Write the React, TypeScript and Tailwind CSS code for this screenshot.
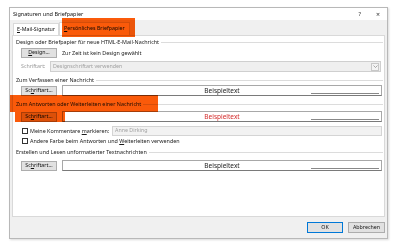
import React from "react";

const font = "font-['Segoe_UI','Noto_Sans',sans-serif]";

function Btn({ children }: { children: React.ReactNode }) {
  return (
    <div className="flex h-[10px] w-[36px] shrink-0 items-center justify-center border border-[#adadad] bg-[#e1e1e1] text-[5.3px] text-[#111]">
      {children}
    </div>
  );
}

function GroupLabel({ children }: { children: React.ReactNode }) {
  return (
    <div className="flex h-[10px] items-center gap-[2px] pl-[3px] pr-[1px]">
      <span className="whitespace-nowrap text-[5.4px] text-[#1a1a1a]">{children}</span>
      <div className="h-px flex-1 bg-[#dcdcdc]" />
    </div>
  );
}

function Preview({ red }: { red?: boolean }) {
  return (
    <div className="relative flex h-[11px] flex-1 items-center justify-center border border-[#a8a8a8] border-b-[#7a7a7a] bg-white">
      <span className={`text-[6.5px] ${red ? "text-[#d42a2a]" : "text-[#222]"}`}>Beispieltext</span>
      <div className="absolute bottom-[1px] right-[2px] h-px w-[68px] bg-[#888]" />
    </div>
  );
}

function FontRow({ red }: { red?: boolean }) {
  return (
    <div className="flex items-center gap-[5px] pl-[8px] pr-[2px]">
      <Btn>
        <span>
          Sc<span className="underline">h</span>riftart...
        </span>
      </Btn>
      <Preview red={red} />
    </div>
  );
}

function Check({ children }: { children: React.ReactNode }) {
  return (
    <div className="flex h-[10px] items-center gap-[2px]">
      <div className="h-[6px] w-[6px] border border-[#333] bg-white" />
      <span className="whitespace-nowrap text-[5.4px] text-[#1a1a1a]">{children}</span>
    </div>
  );
}

export default function App() {
  return (
    <div className={`relative h-[246px] w-[400px] bg-white pl-[9px] pt-[7px] ${font}`}>
      <div className="flex h-[232px] w-[379px] flex-col border border-[#b8b8b8] bg-[#f0f0f0] shadow-[1px_1px_2px_rgba(0,0,0,0.15)]">
        {/* title bar */}
        <div className="flex h-[12px] items-center bg-white pl-[3px] pr-[7px]">
          <span className="text-[5.5px] text-[#111]">Signaturen und Briefpapier</span>
          <span className="ml-auto text-[6px] text-[#333]">?</span>
          <span className="ml-[15px] text-[7px] leading-none text-[#333]">×</span>
        </div>

        {/* tabs */}
        <div className="flex h-[15px] items-end pl-[3px]">
          <div className="flex h-[12px] items-center border border-b-0 border-[#d9d9d9] bg-white px-[3px] text-[5.3px] text-[#111]">
            <span>
              <span className="underline">E</span>-Mail-Signatur
            </span>
          </div>
          <div className="flex h-[13px] items-center border border-b-0 border-[#d9d9d9] bg-white px-[4px] text-[5.3px] text-[#111]">
            <span>
              <span className="underline">P</span>ersönliches Briefpapier
            </span>
          </div>
        </div>

        {/* panel */}
        <div className="mx-[2px] flex h-[182px] flex-col border border-[#d9d9d9] bg-white pt-[1px]">
          <GroupLabel>Design oder Briefpapier für neue HTML-E-Mail-Nachricht</GroupLabel>
          <div className="mt-[1px] flex items-center gap-[5px] pl-[8px]">
            <Btn>
              <span>
                <span className="underline">D</span>esign...
              </span>
            </Btn>
            <span className="text-[5.4px] text-[#1a1a1a]">Zur Zeit ist kein Design gewählt</span>
          </div>
          <div className="mt-[3px] flex items-center gap-[2px] pl-[8px] pr-[3px]">
            <span className="w-[27px] text-[5.3px] text-[#9a9a9a]">Schriftart:</span>
            <div className="flex h-[11px] flex-1 items-center border border-[#cfcfcf] bg-[#efefef] pl-[2px]">
              <span className="text-[5.3px] text-[#a0a0a0]">Designschriftart verwenden</span>
              <div className="ml-auto mr-[1px] flex h-[8px] w-[8px] items-center justify-center border border-[#c8c8c8] bg-[#f4f4f4]">
                <svg width="5" height="3" viewBox="0 0 5 3">
                  <path d="M0.5 0.5 L2.5 2.5 L4.5 0.5" fill="none" stroke="#888" strokeWidth="0.7" />
                </svg>
              </div>
            </div>
          </div>

          <div className="mt-[3px]">
            <GroupLabel>Zum Verfassen einer Nachricht</GroupLabel>
          </div>
          <FontRow />

          <div className="mt-[3px]">
            <GroupLabel>Zum Antworten oder Weiterleiten einer Nachricht</GroupLabel>
          </div>
          <div className="mt-[2px]">
            <FontRow red />
          </div>

          <div className="mt-[4px] flex items-center pl-[9px] pr-[2px]">
            <div className="w-[90px]">
              <Check>
                Meine Kommentare <span className="underline">m</span>arkieren:
              </Check>
            </div>
            <div className="flex h-[10px] flex-1 items-center border border-[#d4d4d4] bg-[#f2f2f2] pl-[2px]">
              <span className="text-[5.3px] text-[#a0a0a0]">Anne Dirking</span>
            </div>
          </div>
          <div className="pl-[9px]">
            <Check>
              Andere Farbe beim Antworten und <span className="underline">W</span>eiterleiten verwenden
            </Check>
          </div>

          <div className="mt-[1px]">
            <GroupLabel>Erstellen und Lesen unformatierter Textnachrichten</GroupLabel>
          </div>
          <div className="mt-[3px]">
            <FontRow />
          </div>
        </div>

        {/* footer */}
        <div className="flex flex-1 items-center justify-end gap-[5px] pr-[2px]">
          <div className="flex h-[11px] w-[36px] items-center justify-center border border-[#0078d7] bg-[#e1e1e1] text-[5.3px] text-[#111]">
            OK
          </div>
          <div className="flex h-[11px] w-[37px] items-center justify-center border border-[#adadad] bg-[#e1e1e1] text-[5.3px] text-[#111]">
            Abbrechen
          </div>
        </div>
      </div>

      {/* orange highlight annotations */}
      <div className="pointer-events-none absolute left-[62px] top-[18px] h-[19px] w-[73px] bg-[#fa5a0a] mix-blend-multiply" />
      <div className="pointer-events-none absolute left-[10px] top-[95px] h-[17px] w-[148px] bg-[#fa5a0a] mix-blend-multiply" />
      <div className="pointer-events-none absolute left-[15px] top-[112px] h-[10px] w-[50px] bg-[#fa5a0a] mix-blend-multiply" />
    </div>
  );
}
